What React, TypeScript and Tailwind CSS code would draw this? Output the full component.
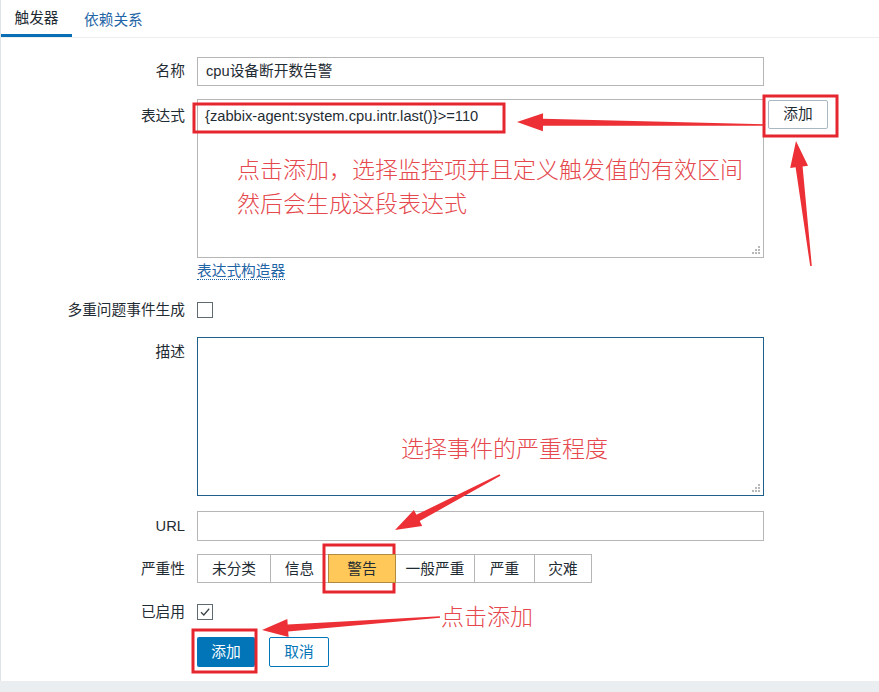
import React from 'react';

const UI_FONT = "font-['Liberation_Sans','Noto_Sans_CJK_SC',sans-serif]";
const NOTE = "pointer-events-none absolute text-[23px] leading-[24px] text-[#e5484d] font-['Noto_Sans_CJK_SC',sans-serif] font-light";

type Pt = [number, number];

// tapered arrow: thin at the tail, wide head at the tip
function arrowPoints(tail: Pt, tip: Pt, headLen = 26, headW = 9, neckW = 3.5, tailW = 0.8) {
  const dx = tip[0] - tail[0];
  const dy = tip[1] - tail[1];
  const len = Math.hypot(dx, dy);
  const ux = dx / len;
  const uy = dy / len;
  const nx = -uy;
  const ny = ux;
  const bx = tip[0] - ux * headLen;
  const by = tip[1] - uy * headLen;
  const pts: Pt[] = [
    [tail[0] + nx * tailW, tail[1] + ny * tailW],
    [bx + nx * neckW, by + ny * neckW],
    [bx + nx * headW, by + ny * headW],
    tip,
    [bx - nx * headW, by - ny * headW],
    [bx - nx * neckW, by - ny * neckW],
    [tail[0] - nx * tailW, tail[1] - ny * tailW],
  ];
  return pts.map((p) => `${p[0].toFixed(1)},${p[1].toFixed(1)}`).join(' ');
}

const ARROWS: { tail: Pt; tip: Pt }[] = [
  { tail: [764, 125], tip: [517, 122] },
  { tail: [811, 266], tip: [796, 141] },
  { tail: [500, 475], tip: [395, 530] },
  { tail: [440, 617], tip: [262, 630] },
];

const BOXES = [
  { x: 194, y: 104, w: 310, h: 28 },
  { x: 764, y: 96, w: 73, h: 40 },
  { x: 324, y: 545, w: 70, h: 47 },
  { x: 193, y: 630, w: 63, h: 42 },
];

const SEVERITIES = [
  { label: '未分类', w: 'w-[74px]' },
  { label: '信息', w: 'w-[59px]' },
  { label: '警告', w: 'w-[68px]', active: true },
  { label: '一般严重', w: 'w-[80px]' },
  { label: '严重', w: 'w-[61px]' },
  { label: '灾难', w: 'w-[58px]' },
];

function Label({ children, className = '' }: { children: React.ReactNode; className?: string }) {
  return <div className={`w-[184px] shrink-0 text-right text-[14.7px] text-[#1f2c33] ${className}`}>{children}</div>;
}

function ResizeGrip() {
  return (
    <svg className="absolute bottom-[2px] right-[2px]" width="10" height="10" viewBox="0 0 10 10">
      <g fill="#b8b8b8">
        <rect x="7" y="1" width="2" height="2" />
        <rect x="4" y="4" width="2" height="2" />
        <rect x="7" y="4" width="2" height="2" />
        <rect x="1" y="7" width="2" height="2" />
        <rect x="4" y="7" width="2" height="2" />
        <rect x="7" y="7" width="2" height="2" />
      </g>
    </svg>
  );
}

function Checkbox({ checked = false }: { checked?: boolean }) {
  return (
    <div className="flex h-[16px] w-[16px] items-center justify-center border border-[#5f6a70] bg-white">
      {checked && (
        <svg width="12" height="12" viewBox="0 0 12 12">
          <path d="M2 6.2 L4.8 9 L10.2 2.8" fill="none" stroke="#3a4448" strokeWidth="1.3" />
        </svg>
      )}
    </div>
  );
}

export default function App() {
  return (
    <div className={`relative h-[692px] w-[879px] overflow-hidden bg-[#ebeef0] ${UI_FONT}`}>
      <div className="h-[681px] border-l border-[#dfe4e7] bg-white">
        {/* tabs */}
        <div className="flex h-[38px] border-b border-[#eceff1] text-[14.7px]">
          <div className="flex w-[71px] items-center justify-center border-b-[3px] border-[#0a6eb4] pt-[3px] text-[#1f2c33]">
            触发器
          </div>
          <div className="flex items-center pl-[12px] pt-[3px] text-[#1f65a6]">依赖关系</div>
        </div>

        <div className="flex flex-col pt-[19px]">
          {/* name */}
          <div className="flex items-center gap-[12px]">
            <Label>名称</Label>
            <div className="flex h-[29px] w-[567px] items-center border border-[#b6b6b6] px-[8px] text-[14.7px] text-[#1f2c33]">
              cpu设备断开数告警
            </div>
          </div>

          {/* expression */}
          <div className="mt-[13px] flex items-start gap-[12px]">
            <Label className="pt-[6px]">表达式</Label>
            <div className="relative h-[159px] w-[567px] border border-[#b6b6b6] px-[7px] pt-[6px]">
              <div className="text-[14.7px] leading-[20px] text-[#1f2c33]">{'{zabbix-agent:system.cpu.intr.last()}>=110'}</div>
              <ResizeGrip />
            </div>
            <button className="-ml-[8px] mt-[1px] h-[29px] w-[60px] rounded-[2px] border border-[#a9b8c2] bg-white text-[14.7px] text-[#1f2c33]">
              添加
            </button>
          </div>
          <div className="mt-[1px] pl-[196px]">
            <span className="border-b border-dotted border-[#1f65a6] text-[14.7px] leading-[18px] text-[#1f65a6]">
              表达式构造器
            </span>
          </div>

          {/* multiple events */}
          <div className="mt-[16px] flex items-center gap-[12px]">
            <Label>多重问题事件生成</Label>
            <Checkbox />
          </div>

          {/* description */}
          <div className="mt-[16px] flex items-start gap-[12px]">
            <Label className="pt-[4px]">描述</Label>
            <div className="relative h-[159px] w-[567px] border border-[#1e5f8c]">
              <ResizeGrip />
            </div>
          </div>

          {/* url */}
          <div className="mt-[15px] flex items-center gap-[12px]">
            <Label>URL</Label>
            <div className="h-[30px] w-[567px] border border-[#b6b6b6]" />
          </div>

          {/* severity */}
          <div className="mt-[13px] flex items-center gap-[12px]">
            <Label>严重性</Label>
            <div className="flex">
              {SEVERITIES.map((s, i) => (
                <div
                  key={s.label}
                  className={`flex h-[29px] items-center justify-center border text-[14.7px] text-[#1f2c33] ${s.w} ${
                    i > 0 ? '-ml-px' : ''
                  } ${s.active ? 'relative z-10 border-[#b08a3e] bg-[#ffc859]' : 'border-[#b6b6b6] bg-white'}`}
                >
                  {s.label}
                </div>
              ))}
            </div>
          </div>

          {/* enabled */}
          <div className="mt-[18px] flex items-center gap-[12px]">
            <Label>已启用</Label>
            <Checkbox checked />
          </div>

          {/* actions */}
          <div className="mt-[14px] flex gap-[14px] pl-[196px]">
            <button className="h-[30px] w-[58px] rounded-[2px] bg-[#0275b8] text-[14.7px] text-white">添加</button>
            <button className="h-[30px] w-[60px] rounded-[2px] border border-[#0275b8] bg-white text-[14.7px] text-[#0275b8]">
              取消
            </button>
          </div>
        </div>
      </div>

      {/* screenshot annotations */}
      <svg className="pointer-events-none absolute left-0 top-0" width="879" height="692" viewBox="0 0 879 692">
        {BOXES.map((b, i) => (
          <rect key={i} x={b.x} y={b.y} width={b.w} height={b.h} fill="none" stroke="#e5262f" strokeWidth="3" />
        ))}
        {ARROWS.map((a, i) => (
          <polygon key={i} points={arrowPoints(a.tail, a.tip)} fill="#ec3036" />
        ))}
      </svg>
      <div className={`${NOTE} left-[237px] top-[156px]`}>点击添加，选择监控项并且定义触发值的有效区间</div>
      <div className={`${NOTE} left-[237px] top-[190px]`}>然后会生成这段表达式</div>
      <div className={`${NOTE} left-[401px] top-[435px]`}>选择事件的严重程度</div>
      <div className={`${NOTE} left-[441px] top-[603px]`}>点击添加</div>
    </div>
  );
}
